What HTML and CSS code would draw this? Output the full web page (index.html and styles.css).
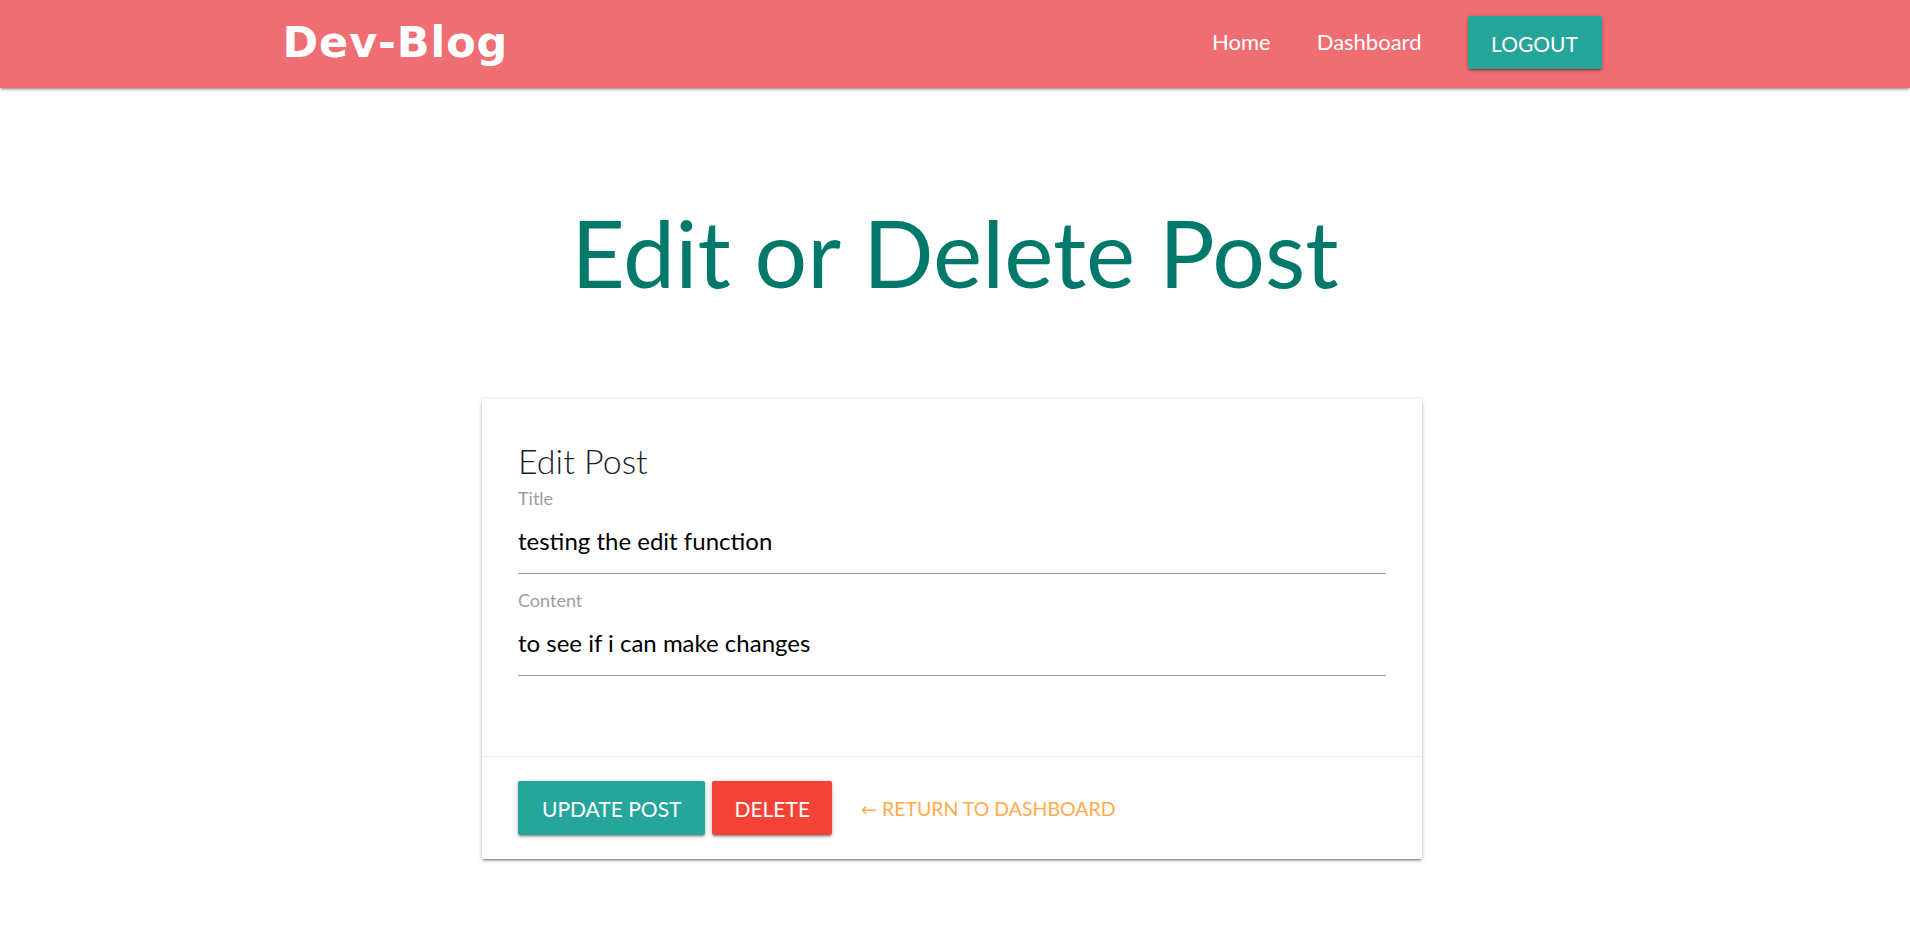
FILE: index.html
```html
<!DOCTYPE html>
<html lang="en">
<head>
<meta charset="utf-8">
<title>Dev-Blog</title>
<link rel="stylesheet" href="styles.css">
</head>
<body>
<header class="navbar">
  <div class="nav-inner">
    <a class="brand" href="#">Dev-Blog</a>
    <ul class="nav-links">
      <li><a class="nav-link" href="#">Home</a></li>
      <li><a class="nav-link" href="#">Dashboard</a></li>
      <li class="nav-btn-item"><a class="btn btn-teal btn-logout" href="#">LOGOUT</a></li>
    </ul>
  </div>
</header>
<main class="main">
  <h1 class="page-title">Edit or Delete Post</h1>
  <div class="card-wrap">
    <form class="card">
      <div class="card-content">
        <span class="card-title">Edit Post</span>
        <div class="field">
          <label class="field-label" for="title">Title</label>
          <input class="field-input" id="title" type="text" value="testing the edit function">
        </div>
        <div class="field field-second">
          <label class="field-label" for="content">Content</label>
          <input class="field-input" id="content" type="text" value="to see if i can make changes">
        </div>
      </div>
      <div class="card-action">
        <button type="button" class="btn btn-teal btn-action">UPDATE POST</button>
        <button type="button" class="btn btn-red btn-action btn-delete">DELETE</button>
        <a class="btn-flat" href="#"><span class="arrow">←</span> RETURN TO DASHBOARD</a>
      </div>
    </form>
  </div>
</main>
</body>
</html>
```
FILE: styles.css
```css
* { box-sizing: border-box; }
html, body { margin: 0; padding: 0; }
body {
  font-family: Lato, "Open Sans", "DejaVu Sans", sans-serif;
  background: #ffffff;
  color: rgba(0,0,0,0.87);
}

.navbar {
  height: 88px;
  background: #ef6e73;
  box-shadow: 0 2px 2px 0 rgba(0,0,0,0.14), 0 3px 1px -2px rgba(0,0,0,0.12), 0 1px 5px 0 rgba(0,0,0,0.2);
}
.nav-inner {
  width: 70%;
  margin: 0 auto;
  height: 88px;
  display: flex;
  align-items: flex-start;
  justify-content: space-between;
}
.brand {
  font-family: "DejaVu Sans", sans-serif;
  font-weight: 700;
  font-size: 43px;
  letter-spacing: 0.9px;
  line-height: 85px;
  color: #ffffff;
  text-decoration: none;
  margin-left: -4px;
}
.nav-links {
  list-style: none;
  margin: 0;
  padding: 0 22px 0 0;
  display: flex;
  align-items: flex-start;
}
.nav-link {
  display: block;
  padding: 0 23px;
  height: 83px;
  line-height: 83px;
  font-size: 22px;
  color: #ffffff;
  text-decoration: none;
}
.nav-btn-item { padding: 16px 0 0 23px; }

.btn {
  display: inline-block;
  border: none;
  border-radius: 2px;
  color: #ffffff;
  text-decoration: none;
  font-family: Lato, "Open Sans", sans-serif;
  font-size: 21px;
  box-shadow: 0 2px 2px 0 rgba(0,0,0,0.16), 0 3px 1px -2px rgba(0,0,0,0.16), 0 1px 5px 0 rgba(0,0,0,0.22);
  cursor: pointer;
}
.btn-teal { background: #26a69a; }
.btn-red { background: #f44336; }
.btn-logout {
  width: 134px;
  height: 53px;
  padding-top: 2px;
  line-height: 51px;
  text-align: center;
}

.main { padding-top: 109px; padding-bottom: 40px; }
.page-title {
  margin: 0;
  text-align: center;
  font-weight: 400;
  font-size: 93px;
  line-height: 1.2;
  color: #00796b;
}

.card-wrap {
  display: flex;
  justify-content: center;
  padding: 90px 6px 0 0;
}
.card {
  width: 940px;
  margin: 0;
  background: #ffffff;
  border-radius: 2px;
  box-shadow: 0 2px 2px 0 rgba(0,0,0,0.16), 0 3px 1px -2px rgba(0,0,0,0.2), 0 1px 5px 0 rgba(0,0,0,0.22);
}
.card-content {
  padding: 42px 36px 80px 36px;
}
.card-title {
  display: block;
  font-size: 34px;
  font-weight: 300;
  line-height: 40px;
  color: #1a1f2b;
}
.field { margin-top: 6px; }
.field-second { margin-top: 15px; }
.field-label {
  display: block;
  font-size: 18px;
  line-height: 22px;
  color: #9e9e9e;
}
.field-input {
  display: block;
  width: 100%;
  height: 65px;
  padding: 0 0 1px 0;
  margin: 0;
  border: none;
  border-bottom: 1px solid #9e9e9e;
  outline: none;
  background: transparent;
  font-family: Lato, "Open Sans", sans-serif;
  font-size: 24px;
  color: #000000;
}

.card-action {
  border-top: 1px solid rgba(160,160,160,0.2);
  padding: 24px 36px;
  display: flex;
  align-items: center;
  gap: 7px;
}
.btn-action {
  height: 54px;
  padding: 2px 24px 0 24px;
  line-height: 52px;
}
.btn-delete { padding: 2px 22px 0 22px; }
.btn-flat {
  display: inline-block;
  height: 54px;
  padding: 2px 23px 0 22px;
  line-height: 52px;
  font-size: 19.5px;
  color: #ffab4d;
  text-decoration: none;
}
.arrow { font-family: "DejaVu Sans", sans-serif; font-size: 19px; }
```
